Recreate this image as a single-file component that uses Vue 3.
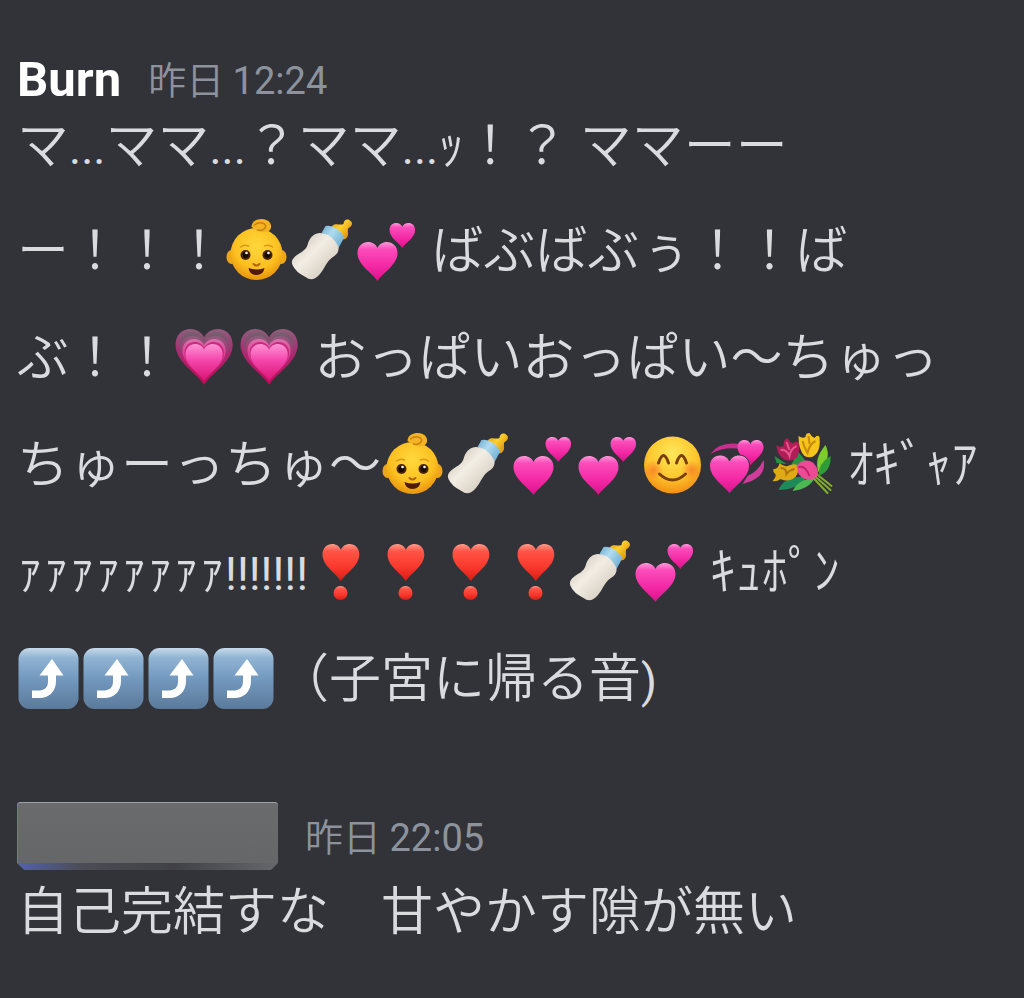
<script setup>
const emoji = (...names) => names.map(name => ({ emoji: name }));

const messages = [
    {
        author: 'Burn',
        time: ['昨日', '12:24'],
        lines: [
            [
                { text: 'マ' }, { latin: '...' }, { text: 'ママ' }, { latin: '...' },
                { text: '？ママ' }, { latin: '...' }, { text: 'ｯ！？ ママーー' },
            ],
            [{ text: 'ー！！！' }, ...emoji('baby', 'bottle', 'hearts'), { text: ' ばぶばぶぅ！！ば' }],
            [{ text: 'ぶ！！' }, ...emoji('growing', 'growing'), { text: ' おっぱいおっぱい〜ちゅっ' }],
            [
                { text: 'ちゅーっちゅ〜' },
                ...emoji('baby', 'bottle', 'hearts', 'hearts', 'smile', 'revolving', 'bouquet'),
                { text: ' ｵｷﾞｬｱ' },
            ],
            [
                { text: 'ｧｧｧｧｧｧｧｧ' }, { latin: '!!!!!!!' },
                ...emoji('exclaim', 'exclaim', 'exclaim', 'exclaim', 'bottle', 'hearts'),
                { text: ' ｷｭﾎﾟﾝ' },
            ],
            [...emoji('up', 'up', 'up', 'up'), { text: '（子宮に帰る音' }, { latin: ')' }],
        ],
    },
    {
        author: null,
        time: ['昨日', '22:05'],
        lines: [[{ text: '自己完結すな　甘やかす隙が無い' }]],
    },
];

const hasEmoji = (line) => line.some(part => part.emoji);
</script>

<template>
    <svg class="defs" aria-hidden="true">
        <defs>
            <radialGradient id="skin" cx="0.5" cy="0.35" r="0.65">
                <stop offset="0" stop-color="#ffd83c" />
                <stop offset="0.65" stop-color="#fcc021" />
                <stop offset="1" stop-color="#e8940c" />
            </radialGradient>
            <radialGradient id="face" cx="0.5" cy="0.3" r="0.72">
                <stop offset="0" stop-color="#ffe75a" />
                <stop offset="0.6" stop-color="#fdc62c" />
                <stop offset="1" stop-color="#f28a12" />
            </radialGradient>
            <radialGradient id="blush">
                <stop offset="0" stop-color="#f7622a" stop-opacity="0.6" />
                <stop offset="1" stop-color="#f7622a" stop-opacity="0" />
            </radialGradient>
            <linearGradient id="milk" x1="0.1" y1="0.2" x2="0.8" y2="0.9">
                <stop offset="0" stop-color="#d2c9bd" />
                <stop offset="0.4" stop-color="#f3eee5" />
                <stop offset="1" stop-color="#d3cabc" />
            </linearGradient>
            <linearGradient id="collar" x1="0" y1="0" x2="1" y2="0.7">
                <stop offset="0" stop-color="#6ba9cd" />
                <stop offset="0.45" stop-color="#b0dcf0" />
                <stop offset="1" stop-color="#71aed0" />
            </linearGradient>
            <linearGradient id="teat" x1="0" y1="0" x2="1" y2="0.8">
                <stop offset="0" stop-color="#e39b0c" />
                <stop offset="0.45" stop-color="#ffd130" />
                <stop offset="1" stop-color="#d48405" />
            </linearGradient>
            <linearGradient id="pink" x1="0" y1="0" x2="0" y2="1">
                <stop offset="0" stop-color="#ff9ad9" />
                <stop offset="0.18" stop-color="#fb4dbb" />
                <stop offset="0.6" stop-color="#f42aa6" />
                <stop offset="1" stop-color="#da1289" />
            </linearGradient>
            <linearGradient id="ring" x1="0" y1="0" x2="0" y2="1">
                <stop offset="0" stop-color="#8f5f7d" />
                <stop offset="0.4" stop-color="#ab2a73" />
                <stop offset="1" stop-color="#c00a57" />
            </linearGradient>
            <linearGradient id="haze" x1="0" y1="0" x2="0" y2="1">
                <stop offset="0" stop-color="#75606f" />
                <stop offset="0.3" stop-color="#8c4570" />
                <stop offset="0.6" stop-color="#c3186a" />
            </linearGradient>
            <linearGradient id="middle" x1="0" y1="0" x2="0" y2="1">
                <stop offset="0" stop-color="#d874ab" />
                <stop offset="0.5" stop-color="#d82f86" />
                <stop offset="1" stop-color="#cd1268" />
            </linearGradient>
            <linearGradient id="core" x1="0" y1="0" x2="0" y2="1">
                <stop offset="0" stop-color="#ff93d4" />
                <stop offset="0.45" stop-color="#f446ac" />
                <stop offset="1" stop-color="#dc1474" />
            </linearGradient>
            <linearGradient id="red" x1="0" y1="0" x2="0" y2="1">
                <stop offset="0" stop-color="#ff9b8a" />
                <stop offset="0.2" stop-color="#ff5446" />
                <stop offset="0.6" stop-color="#fb3a2e" />
                <stop offset="1" stop-color="#da1c14" />
            </linearGradient>
            <linearGradient id="key" x1="0" y1="0" x2="0" y2="1">
                <stop offset="0" stop-color="#c6daea" />
                <stop offset="0.16" stop-color="#91b4d3" />
                <stop offset="0.5" stop-color="#7399bf" />
                <stop offset="1" stop-color="#5b7a99" />
            </linearGradient>
            <path id="heart" d="M20 39C15 31 0 23 0 11C0 4 5 0 10.500 0C15 0 18.500 2.500 20 6C21.500 2.500 25 0 29.500 0C35 0 40 4 40 11C40 23 25 31 20 39Z" />
        </defs>

        <symbol id="baby" viewBox="0 0 64 64">
            <ellipse cx="6" cy="39" rx="5" ry="7" fill="#eda51a" />
            <ellipse cx="56" cy="39" rx="5" ry="7" fill="#eda51a" />
            <ellipse cx="31" cy="36" rx="26" ry="26" fill="url(#skin)" />
            <path d="M26 9C26 3 32 1 36 1C44 1 47 7 45 11C43 15 37 15 33 13Z" fill="#f3b325" />
            <path d="M29 7C34 3 41 5 40 9C39 12 35 13 32 12" fill="none" stroke="#c98110" stroke-width="1.500" stroke-linecap="round" />
            <path d="M15 29Q19 26 23 28M39 28Q43 26 47 29" fill="none" stroke="#d9981a" stroke-width="1.500" stroke-linecap="round" />
            <ellipse cx="20" cy="37" rx="5" ry="5" fill="#4a2406" />
            <ellipse cx="42" cy="37" rx="5" ry="5" fill="#4a2406" />
            <circle cx="20" cy="37" r="3" fill="#170a02" />
            <circle cx="42" cy="37" r="3" fill="#170a02" />
            <circle cx="21" cy="35" r="1.300" fill="#fff" />
            <circle cx="43" cy="35" r="1.300" fill="#fff" />
            <path d="M28 46Q31 49 34 46" fill="none" stroke="#b26408" stroke-width="2" stroke-linecap="round" />
            <path d="M23 50Q31 53 39 50Q38 57 31 57Q24 57 23 50Z" fill="#4d1b05" />
        </symbol>

        <symbol id="bottle" viewBox="0 0 64 64">
            <path d="M41 9C44 4 50 8 53 6C53 2 57 0 60 3C63 5 61 9 58 10C56 13 60 17 55 21L49 22Z" fill="url(#teat)" />
            <path d="M35 8Q45 6 54 19L48 30Q42 20 31 15Z" fill="url(#collar)" />
            <path d="M29 15Q41 15 48 29C49 37 42 38 38 43C33 50 31 56 25 60Q20 63 15 59Q5 54 2 47Q0 43 4 39C10 34 15 33 17 27C19 20 22 16 29 15Z" fill="url(#milk)" />
        </symbol>

        <symbol id="hearts" viewBox="0 0 64 64">
            <use href="#heart" fill="url(#pink)" transform="translate(2 24)" />
            <use href="#heart" fill="url(#pink)" transform="translate(34 5) scale(0.640)" />
        </symbol>

        <symbol id="growing" viewBox="0 0 64 64">
            <use href="#heart" fill="url(#ring)" transform="translate(2 4) scale(1.430)" />
            <use href="#heart" fill="url(#haze)" transform="translate(5 7) scale(1.280)" />
            <use href="#heart" fill="url(#ring)" transform="translate(7 11) scale(1.180)" />
            <use href="#heart" fill="url(#middle)" transform="translate(9 14) scale(1.080)" />
            <use href="#heart" fill="#cc2a80" transform="translate(11 17) scale(0.990)" />
            <use href="#heart" fill="url(#core)" transform="translate(12 19) scale(0.930)" />
        </symbol>

        <symbol id="smile" viewBox="0 0 64 64">
            <circle cx="31" cy="33" r="28.500" fill="url(#face)" />
            <circle cx="12" cy="38" r="10" fill="url(#blush)" />
            <circle cx="50" cy="38" r="10" fill="url(#blush)" />
            <path d="M17 31Q22 16 27 31M35 31Q40 16 45 31" fill="none" stroke="#7a3f08" stroke-width="3" stroke-linecap="round" />
            <path d="M18 42Q31 54 44 42" fill="none" stroke="#7a3f08" stroke-width="3" stroke-linecap="round" />
        </symbol>

        <symbol id="revolving" viewBox="0 0 64 64">
            <path d="M4 22Q12 9 34 12L35 17Q17 14 4 22Z" fill="#c92e91" />
            <path d="M57 28Q61 46 36 52L41 44Q52 39 57 28Z" fill="#cf3c9a" />
            <use href="#heart" fill="url(#pink)" transform="translate(31 8) scale(0.650)" />
            <use href="#heart" fill="url(#pink)" stroke="#323338" stroke-width="1" transform="translate(3 23)" />
        </symbol>

        <symbol id="bouquet" viewBox="0 0 64 64">
            <path d="M40 44L56 61M42 43L59 58M45 42L60 54" fill="none" stroke="#83ad32" stroke-width="2" stroke-linecap="round" />
            <path d="M54 13Q61 27 47 40Q42 27 54 13Z" fill="#7ccc2c" />
            <path d="M59 24Q60 39 47 44Q47 31 59 24Z" fill="#2f9c37" />
            <path d="M3 24L15 32L5 31ZM20 32L27 20L35 30L25 39Z" fill="#279242" />
            <path d="M7 58Q13 43 36 45Q25 58 7 58Z" fill="#1d8a58" />
            <path d="M21 59Q27 47 43 46Q38 57 21 59Z" fill="#4bb851" />
            <path d="M5 13Q8 16 12 14Q12 7 16 6Q18 11 22 11Q26 8 28 12Q28 20 26 25Q20 31 12 27Q5 22 5 13Z" fill="#b11e57" />
            <path d="M9 18Q15 17 18 24Q19 17 25 14M15 10L18 18" fill="none" stroke="#e4568d" stroke-width="2" />
            <path d="M27 4Q31 7 34 5Q34 1 38 1Q40 5 43 6Q46 2 48 5Q49 15 46 20Q41 28 33 24Q27 18 27 4Z" fill="#f5c51c" />
            <path d="M31 9Q33 16 36 21Q38 12 44 9M37 4L38 12" fill="none" stroke="#c88b09" stroke-width="2" />
            <path d="M8 31Q12 35 16 34Q22 31 26 33Q28 40 24 45Q17 51 9 47Q5 50 1 49Q5 45 4 42Q1 40 2 37Q7 37 8 31Z" fill="#e0aa16" />
            <path d="M9 36Q15 36 15 42Q18 38 23 37" fill="none" stroke="#ad750a" stroke-width="2" />
            <path d="M25 34Q33 25 42 31Q49 39 45 45Q36 52 27 42Z" fill="#ed4b96" />
            <path d="M27 35Q34 33 38 44" fill="none" stroke="#bd246c" stroke-width="2" />
        </symbol>

        <symbol id="exclaim" viewBox="0 0 64 64">
            <use href="#heart" fill="url(#red)" transform="translate(14 5) scale(0.920 0.950)" />
            <circle cx="32" cy="54" r="7" fill="url(#red)" />
        </symbol>

        <symbol id="up" viewBox="0 0 64 64">
            <rect x="1" y="2" width="60" height="61" rx="11" fill="url(#key)" />
            <path d="M34.500 13L46 29.500H38.500V35C38.500 46 31 52 22 52H14.500V44.500H20C27 44.500 30.500 42 30.500 35V29.500H22Z" fill="#fff" />
        </symbol>
    </svg>

    <main class="chat">
        <article v-for="(message, i) in messages" :key="i" class="message">
            <header class="header">
                <h2 v-if="message.author" class="author">{{ message.author }}</h2>
                <div v-else class="plate"></div>
                <time class="time">{{ message.time[0] }} <span class="clock">{{ message.time[1] }}</span></time>
            </header>
            <div class="body">
                <p v-for="(line, j) in message.lines" :key="j" class="line" :class="{ 'line-emoji': hasEmoji(line) }">
                    <template v-for="(part, k) in line" :key="k">
                        <svg v-if="part.emoji" class="emoji" viewBox="0 0 64 64"><use :href="'#' + part.emoji" /></svg>
                        <span v-else-if="part.latin" class="latin">{{ part.latin }}</span>
                        <span v-else>{{ part.text }}</span>
                    </template>
                </p>
            </div>
        </article>
    </main>
</template>

<style>
body {
    margin: 0;
    background: #323338;
}
</style>

<style scoped>
.defs {
    position: absolute;
    width: 0;
    height: 0;
}
.chat {
    display: flex;
    flex-direction: column;
    gap: 89px;
    padding: 55px 17px 48px;
    color: #d9dbdf;
    font-family: "Noto Sans CJK JP", sans-serif;
    font-weight: 350;
}
.header {
    display: flex;
    align-items: center;
    gap: 27px;
    min-height: 46px;
    margin-bottom: 2px;
}
.author {
    margin: 0;
    color: #fff;
    font: 700 49px/46px Roboto, sans-serif;
}
.time {
    color: #8d939d;
    font-size: 38px;
    line-height: 46px;
}
.clock {
    font-family: Roboto, sans-serif;
    font-weight: 400;
}
.plate {
    width: 261px;
    height: 68px;
    border-radius: 3px;
    background:
        linear-gradient(90deg, #5262a8, #4b4c55 25%, #414145 60%, #66676b) bottom / 100% 7px no-repeat,
        linear-gradient(#6b6b6d, #646667);
    box-shadow: inset 0 1px #a0a2aa, inset 1px 0 #6f78a4;
    clip-path: polygon(0 0, 100% 0, 100% 61px, 254px 100%, 7px 100%, 0 61px);
}
.body {
    display: flex;
    flex-direction: column;
    gap: 30px;
}
.line {
    margin: 0;
    font-size: 52px;
    line-height: 72px;
    white-space: nowrap;
}
.line span {
    white-space: pre;
}
.line-emoji {
    line-height: 77px;
}
.latin {
    font-family: Roboto, sans-serif;
    font-size: 46px;
    font-weight: 400;
    line-height: 1;
}
.emoji {
    width: 65px;
    height: 64px;
    vertical-align: -13px;
}
</style>
